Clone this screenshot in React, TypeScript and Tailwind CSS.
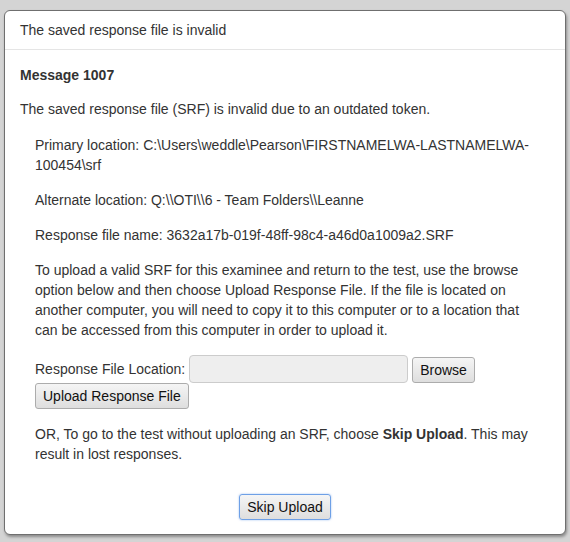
const base =
  "h-[26px] rounded-[3px] border bg-gradient-to-b from-[#f5f5f5] to-[#dedede] px-[7px] text-[14px] leading-[24px] text-[#111]";
const btn = `${base} border-[#acacac]`;

export default function App() {
  return (
    <div
      className="min-h-[542px] w-[570px] bg-[#d4d4d4] pl-[4px] pt-[10px] text-[14px] text-[#333]"
      style={{ fontFamily: '"Liberation Sans", Arial, sans-serif' }}
    >
      <div className="w-[562px] overflow-hidden rounded-[6px] border border-[#6f6f6f] bg-white shadow-[1px_2px_3px_rgba(0,0,0,0.35)]">
        <div className="border-b border-[#e5e5e5] px-[15px] py-[9px] leading-5">
          The saved response file is invalid
        </div>

        <div className="px-[15px] pb-[14px] pt-[15px] leading-5">
          <p className="mb-[14px] font-bold">Message 1007</p>
          <p className="mb-4">
            The saved response file (SRF) is invalid due to an outdated token.
          </p>

          <div className="px-[15px]">
            <p className="mb-[15px]">
              Primary location:
              C:\Users\weddle\Pearson\FIRSTNAMELWA-LASTNAMELWA-100454\srf
            </p>
            <p className="mb-[15px]">
              Alternate location: Q:\\OTI\\6 - Team Folders\\Leanne
            </p>
            <p className="mb-[15px]">
              Response file name: 3632a17b-019f-48ff-98c4-a46d0a1009a2.SRF
            </p>
            <p className="mb-[15px]">
              To upload a valid SRF for this examinee and return to the test,
              use the browse option below and then choose Upload Response File.
              If the file is located on another computer, you will need to copy
              it to this computer or to a location that can be accessed from
              this computer in order to upload it.
            </p>

            <div className="flex items-center">
              <span>Response File Location:</span>
              <div className="ml-[4px] h-[28px] w-[219px] rounded-[4px] border border-[#cccccc] bg-[#eeeeee]" />
              <button className={`${btn} ml-[4px] mt-[2px]`}>Browse</button>
            </div>
            <button className={btn}>Upload Response File</button>

            <p className="mt-[15px]">
              OR, To go to the test without uploading an SRF, choose{" "}
              <b>Skip Upload</b>. This may result in lost responses.
            </p>
          </div>

          <div className="mt-[30px] flex justify-center">
            <button
              className={`${base} border-[#6ea0e6] shadow-[0_0_2px_rgba(80,140,230,0.6)]`}
            >
              Skip Upload
            </button>
          </div>
        </div>
      </div>
    </div>
  );
}
